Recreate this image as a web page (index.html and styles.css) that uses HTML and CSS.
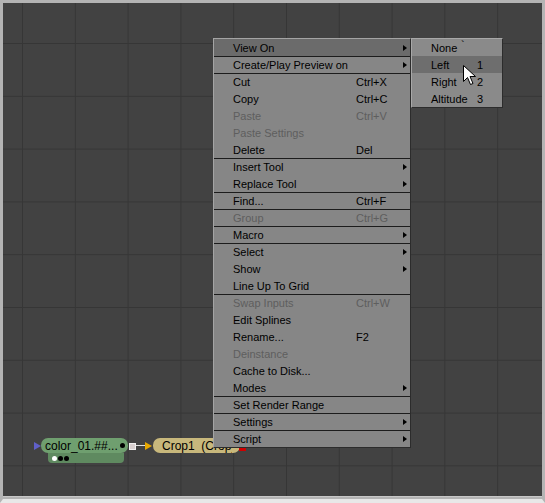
FILE: index.html
```html
<!DOCTYPE html>
<html>
<head>
<meta charset="utf-8">
<link rel="stylesheet" href="styles.css">
</head>
<body>
<div class="frame">
  <div class="canvas">
    <div class="node-in in-blue"></div>
    <div class="node green">
      <span class="node-label">color_01.##...</span>
      <span class="dot"></span>
    </div>
    <div class="node-tab">
      <span class="tdot white"></span><span class="tdot"></span><span class="tdot"></span>
    </div>
    <div class="out-square"></div>
    <div class="link"></div>
    <div class="node-in in-orange"></div>
    <div class="node tan">
      <span class="node-label">Crop1&nbsp; (Crop)</span>
      <span class="dot"></span>
    </div>
    <div class="red-square"></div>

    <div class="menu">
      <div class="item hl"><span class="label">View On</span><span class="key"></span><span class="arrow"></span></div>
      <div class="item sep"><span class="label">Create/Play Preview on</span><span class="key"></span><span class="arrow"></span></div>
      <div class="item sep"><span class="label">Cut</span><span class="key">Ctrl+X</span></div>
      <div class="item"><span class="label">Copy</span><span class="key">Ctrl+C</span></div>
      <div class="item dis"><span class="label">Paste</span><span class="key">Ctrl+V</span></div>
      <div class="item dis"><span class="label">Paste Settings</span></div>
      <div class="item"><span class="label">Delete</span><span class="key">Del</span></div>
      <div class="item sep"><span class="label">Insert Tool</span><span class="key"></span><span class="arrow"></span></div>
      <div class="item"><span class="label">Replace Tool</span><span class="key"></span><span class="arrow"></span></div>
      <div class="item sep"><span class="label">Find...</span><span class="key">Ctrl+F</span></div>
      <div class="item sep dis"><span class="label">Group</span><span class="key">Ctrl+G</span></div>
      <div class="item sep"><span class="label">Macro</span><span class="key"></span><span class="arrow"></span></div>
      <div class="item sep"><span class="label">Select</span><span class="key"></span><span class="arrow"></span></div>
      <div class="item"><span class="label">Show</span><span class="key"></span><span class="arrow"></span></div>
      <div class="item"><span class="label">Line Up To Grid</span></div>
      <div class="item sep dis"><span class="label">Swap Inputs</span><span class="key">Ctrl+W</span></div>
      <div class="item"><span class="label">Edit Splines</span></div>
      <div class="item"><span class="label">Rename...</span><span class="key">F2</span></div>
      <div class="item dis"><span class="label">Deinstance</span></div>
      <div class="item"><span class="label">Cache to Disk...</span></div>
      <div class="item"><span class="label">Modes</span><span class="key"></span><span class="arrow"></span></div>
      <div class="item sep"><span class="label">Set Render Range</span></div>
      <div class="item sep"><span class="label">Settings</span><span class="key"></span><span class="arrow"></span></div>
      <div class="item sep"><span class="label">Script</span><span class="key"></span><span class="arrow"></span></div>
    </div>

    <div class="submenu">
      <div class="sitem"><span class="slabel">None</span><span class="skey tick">`</span></div>
      <div class="sitem hl"><span class="slabel">Left</span><span class="skey">1</span></div>
      <div class="sitem"><span class="slabel">Right</span><span class="skey">2</span></div>
      <div class="sitem"><span class="slabel">Altitude</span><span class="skey">3</span></div>
    </div>

    <svg class="cursor" width="14" height="22" viewBox="0 0 14 22">
      <path d="M0.5 0.5 L0.5 16.5 L4.5 12.5 L7.5 19.5 L10 18.5 L7 11.5 L12.5 11.5 Z" fill="#fff" stroke="#000" stroke-width="1"/>
    </svg>
  </div>
</div>
</body>
</html>
```
FILE: styles.css
```css
html, body {
  margin: 0;
  padding: 0;
  background: #d8d8d8;
}
.frame {
  width: 545px;
  height: 503px;
  box-sizing: border-box;
  border-top: 3px solid #b4b4b4;
  border-left: 3px solid #b4b4b4;
  border-right: 3px solid #b4b4b4;
  border-bottom: 4px solid #e8e8e8;
  background: #b4b4b4;
}
.canvas {
  position: relative;
  width: 539px;
  height: 493px;
  overflow: hidden;
  background-color: #424242;
  background-image:
    linear-gradient(to right, #363636 1px, transparent 1px),
    linear-gradient(to bottom, #363636 1px, transparent 1px);
  background-size: 52.8px 52.8px;
  background-position: 19px 40px;
  font-family: "Liberation Sans", Arial, sans-serif;
  font-size: 11px;
  color: #000;
  border-bottom: 1px solid #c8c8c8;
}

/* nodes */
.node {
  position: absolute;
  top: 435px;
  height: 15px;
  width: 87px;
  border-radius: 7px;
  display: flex;
  align-items: center;
  box-sizing: border-box;
  padding-left: 4px;
  font-size: 12px;
}
.green { left: 38px; background: #6f9f6f; }
.tan { left: 150px; background: #c8b87c; padding-left: 9px; }
.node-label { flex: 1; white-space: nowrap; }
.tan .node-label { overflow: hidden; }
.dot {
  width: 5px; height: 5px; border-radius: 50%;
  background: #000; margin-right: 3px; flex: none;
}
.node-tab {
  position: absolute;
  left: 45px; top: 450px;
  width: 76px; height: 10px;
  background: #5f8a60;
  border-radius: 0 0 4px 4px;
  display: flex; align-items: center; gap: 1px;
  padding-left: 4px; box-sizing: border-box;
}
.tdot { width: 5px; height: 5px; border-radius: 50%; background: #000; }
.tdot.white { background: #fff; }
.node-in {
  position: absolute; top: 439px;
  width: 0; height: 0;
  border-top: 4px solid transparent;
  border-bottom: 4px solid transparent;
}
.in-blue { left: 31px; border-left: 7px solid #6060c8; }
.in-orange { left: 142px; border-left: 7px solid #e8a800; }
.out-square {
  position: absolute; left: 126px; top: 440px;
  width: 5px; height: 5px;
  background: #d8d0d0; border: 1px solid #f0f0f0;
}
.link {
  position: absolute; left: 133px; top: 442px;
  width: 9px; height: 1px; background: #e0e0e0;
}
.red-square {
  position: absolute; left: 236px; top: 443px;
  width: 7px; height: 5px; background: #d00000;
}

/* context menu */
.menu {
  position: absolute;
  left: 210px; top: 35px;
  width: 198px;
  box-sizing: border-box;
  background: #868686;
  border-left: 1px solid #a4a4a4;
  border-top: 1px solid #a4a4a4;
  border-right: 1px solid #2c2c2c;
  border-bottom: 1px solid #2c2c2c;
  display: flex;
  flex-direction: column;
}
.item {
  height: 17px;
  box-sizing: border-box;
  display: grid;
  grid-template-columns: 123px 47px 8px;
  align-items: center;
  padding-left: 19px;
  white-space: nowrap;
}
.item.sep { border-top: 1px solid #1c1c1c; }
.item.hl { background: #6b6b6b; }
.item.dis { color: #5e5e5e; }
.arrow {
  width: 0; height: 0;
  border-top: 3px solid transparent;
  border-bottom: 3px solid transparent;
  border-left: 4px solid #000;
}

.submenu {
  position: absolute;
  left: 408px; top: 35px;
  width: 92px;
  box-sizing: border-box;
  background: #8a8a8a;
  border-left: 1px solid #a8a8a8;
  border-top: 1px solid #a8a8a8;
  border-right: 1px solid #2c2c2c;
  border-bottom: 1px solid #2c2c2c;
  display: flex;
  flex-direction: column;
}
.sitem {
  height: 17px;
  display: grid;
  grid-template-columns: 46px 12px;
  align-items: center;
  padding-left: 19px;
}
.sitem.hl { background: #6e6e6e; }
.tick { position: relative; top: -3px; left: -16px; }

.cursor {
  position: absolute;
  left: 460px; top: 62px;
}
```
